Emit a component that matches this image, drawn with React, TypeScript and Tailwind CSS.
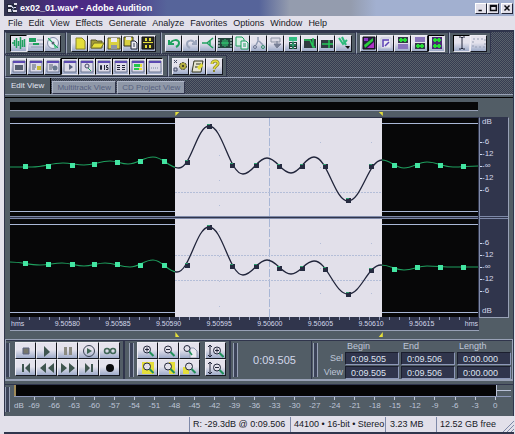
import React from 'react';

const GREEN = '#1fa05f';
const NAVY = '#33384f';
const YELLOW = '#e5df3a';

const windowFrame = (
  <>
    <path d="M2 2h12v11H2z" fill="#dddbe8" stroke="#6b7490" />
    <path d="M2 2h12v2H2z" fill="#5b48b0" />
  </>
);

const magnifier = (
  <>
    <circle cx="7" cy="5.5" r="3.5" fill="#e2e0ea" stroke="#22263a" />
    <path d="M9.5 8l4 4" stroke="#20905a" strokeWidth="2" />
  </>
);

const heightArrow = <path d="M2 1v12M0 3l2-2 2 2M0 11l2 2 2-2" fill="none" stroke="#22263a" />;

const icons: Record<string, React.ReactNode> = {
  wave: <path d="M1 7h2M3.5 4v6M5.5 2v10M7.5 5v5M9.5 1v12M11.5 4v7M13.5 3v8M15 7h1" stroke={GREEN} strokeWidth="1.5" />,
  multitrack: (
    <>
      <path d="M1 2h7v4H1z" fill={GREEN} />
      <path d="M9 4h6M1 8h5M7 8h8M3 11h12" stroke="#8f9ab2" />
      <path d="M5 7h6v2H5z" fill={GREEN} />
    </>
  ),
  cd: (
    <>
      <circle cx="8" cy="7" r="5.5" fill="#e9edf5" stroke="#7d88a6" />
      <path d="M8 7L3 4l2-2zM8 7l5 4-3 2z" fill="#58c990" />
      <path d="M3 2l10 10" stroke={GREEN} />
      <circle cx="8" cy="7" r="1.5" fill="#555e70" />
    </>
  ),
  newFile: <path d="M4 2h6l3 3v8H4z" fill={YELLOW} stroke="#8a852d" />,
  open: (
    <>
      <path d="M2 4h5l1 1h5v7H2z" fill="#a39c36" stroke="#55532a" />
      <path d="M2 12l3-5h10l-3 5z" fill={YELLOW} stroke="#77732d" />
    </>
  ),
  save: (
    <>
      <path d="M2 2h12v11H2z" fill="#d9d040" stroke="#55532a" />
      <path d="M5 2h6v4H5z" fill="#eceaf2" />
      <path d="M5 9h6v4H5z" fill="#8d93a4" />
    </>
  ),
  saveAs: (
    <>
      <path d="M1 1h9v9H1z" fill="#d9d040" stroke="#33351f" />
      <path d="M3 1h5v3H3z" fill="#eceaf2" />
      <path d="M8 5h4l2 2v6H8z" fill="#eceaf2" stroke="#22263a" />
      <path d="M10 8h2M10 10h2" stroke={NAVY} />
    </>
  ),
  saveAll: (
    <>
      <path d="M2 1h12v12H2z" fill="#2b2b20" stroke="#111" />
      <path d="M5 2h2v3H5zM9 2h2v3H9zM3 6h10v1H3zM5 9h6v3H5z" fill={YELLOW} />
      <path d="M7 9h2v3H7z" fill="#222" />
    </>
  ),
  undo: <path d="M3 4v4h5M4 8c2-5 9-5 9-1 0 2-1 3-3 4" fill="none" stroke={GREEN} strokeWidth="2" />,
  redo: <path d="M13 4v4H9M12 8C10 3 4 4 4 8c0 2 1 3 3 4" fill="none" stroke="#9ba5bb" strokeWidth="2" />,
  cut: <path d="M2 7h5l6-5M7 7l6 5M10 4v6" fill="none" stroke={GREEN} strokeWidth="1.5" />,
  trim: (
    <>
      <path d="M1 2h14v10H1z" fill="#24443c" />
      <path d="M4 7h8M6 4v6M8 3v8M10 4v6" stroke="#32d377" />
      <path d="M2 3v8M14 3v8" stroke="#d8e5e8" strokeDasharray="2 1" />
    </>
  ),
  copy: (
    <>
      <path d="M2 1h6l2 2v7H2z" fill="#d8f0e4" stroke={GREEN} />
      <path d="M7 5h5l2 2v6H7z" fill="#e9edf5" stroke={GREEN} />
      <path d="M9 8h3M9 10h3" stroke={GREEN} />
    </>
  ),
  scissors: (
    <>
      <path d="M7 1v4l-2 4M8 5l4 4" fill="none" stroke="#8f9ab2" strokeWidth="1.5" />
      <circle cx="4" cy="11" r="1.5" fill="none" stroke="#6b7490" />
      <circle cx="12" cy="11" r="1.5" fill="none" stroke="#35906a" />
    </>
  ),
  paste: (
    <>
      <path d="M3 2h9v4H3z" fill="#dad9e4" stroke="#8d93a4" />
      <path d="M9 5v6M6 8l3 4 4-4z" fill="#777f95" stroke="#777f95" />
    </>
  ),
  mix: (
    <>
      <path d="M4 1h8v4H4z" fill="#33bd82" />
      <path d="M4 6h8v7H4z" fill="#203a35" />
      <path d="M8 5v8M5 9h6" stroke="#33bd82" />
      <path d="M5 7h2v1H5zM9 7h2v1H9zM5 11h2v1H5zM9 11h2v1H9z" fill="#e2e0ea" />
    </>
  ),
  convert: (
    <>
      <path d="M2 3h12v9H2z" fill="#303b40" />
      <path d="M2 4h6l3 7h2M11 2v8" fill="none" stroke="#26c95a" strokeWidth="1.5" />
    </>
  ),
  insert: (
    <>
      <path d="M2 4h12v8H2z" fill="#303b40" />
      <path d="M3 8h11M10 4v8" stroke="#26c95a" strokeWidth="1.5" />
    </>
  ),
  brush: (
    <>
      <path d="M3 2l4 6 4-4M6 1l4 8" fill="none" stroke="#2dbb7b" strokeWidth="2" />
      <path d="M9 10h5l-2 3z" fill="#111" />
    </>
  ),
  spectral: (
    <>
      <path d="M2 1h12v12H2z" fill="#2a1f48" stroke="#111" />
      <path d="M3 9l9-7v3l-8 7z" fill="#2bd03a" />
      <path d="M6 12l7-6v6z" fill="#b132c8" />
      <path d="M3 2h4v3H3z" fill="#8c35c4" />
    </>
  ),
  corner: (
    <>
      <path d="M3 2h10v10H3z" fill="#e9e7f0" stroke="#c3c8d8" />
      <path d="M5 11V4h6M7 10l4-4" fill="none" stroke="#5a3fb4" strokeWidth="1.5" />
    </>
  ),
  trackTop: (
    <>
      <path d="M3 1h10v6H3z" fill="#333a48" />
      <path d="M4 4h8M6 2v4M10 2v4" stroke="#25dd35" strokeWidth="2" />
      <path d="M3 8h10v5H3z" fill="#8a76bc" />
    </>
  ),
  trackBottom: (
    <>
      <path d="M3 1h10v5H3z" fill="#8a76bc" />
      <path d="M3 7h10v6H3z" fill="#333a48" />
      <path d="M4 10h8M6 8v4M10 8v4" stroke="#25dd35" strokeWidth="2" />
    </>
  ),
  trackBoth: (
    <>
      <path d="M3 1h10v12H3z" fill="#4a2a74" />
      <path d="M4 4h8M6 2v4M10 2v4M4 10h8M6 8v4M10 8v4" stroke="#25dd35" strokeWidth="2" />
    </>
  ),
  beam: <path d="M5 1h2l1 1 1-1h2M8 2v10M5 13h2l1-1 1 1h2" fill="none" stroke="#22263a" />,
  marquee: <path d="M2 3h12v8H2z" fill="none" stroke="#979fb4" strokeDasharray="2 2" />,
  winList: <>{windowFrame}<path d="M4 6h8v5H4z" fill="#555e70" /></>,
  winFx: <>{windowFrame}<path d="M4 6h4M4 8h4M4 10h3" stroke="#555e70" /><path d="M9 7h4v4H9z" fill="#c8bd34" /></>,
  winCue: <>{windowFrame}<path d="M4 6h4M4 8h4M4 10h3" stroke="#555e70" /><circle cx="10" cy="9" r="2.5" fill="#68788e" /></>,
  winPlay: <>{windowFrame}<path d="M7 5v6l4-3z" fill="#5a6380" /></>,
  winZoom: <>{windowFrame}<circle cx="8" cy="7" r="2" fill="none" stroke="#444b66" /><path d="M9 9l3 3" stroke={GREEN} /></>,
  winTime: <>{windowFrame}<path d="M4.5 6.5h1v4h-1zM8.5 6v5M12 6.5h-1.500v2H12v2h-2" fill="none" stroke="#22263a" /></>,
  winSel: <>{windowFrame}<path d="M4 6.5h3M4 8.5h3M4 10.5h3M9 6.5h3M9 8.5h3M9 10.5h3" stroke="#22263a" /></>,
  winLevel: (
    <>
      {windowFrame}
      <path d="M4 5h6v3H4zM4 9h5v2H4z" fill="#25c84a" />
      <path d="M10 5h2v3h-2zM9 9h3v2H9z" fill={YELLOW} />
    </>
  ),
  winStatus: <>{windowFrame}<path d="M4 9h8" stroke="#7d88a6" strokeDasharray="1 1" /></>,
  options: (
    <>
      <path d="M1 1l3 3M4 1L1 4M1 9h3v3H1z" fill="none" stroke="#444b66" />
      <circle cx="10" cy="7" r="3.5" fill="#b4ad42" stroke="#3b3d30" strokeDasharray="2 1" />
      <circle cx="10" cy="7" r="1" fill="#222" />
    </>
  ),
  script: (
    <>
      <path d="M4 2h9l-2 11H2z" fill="#e5e3d0" stroke="#33351f" />
      <path d="M6 5h5M5 8h4" stroke="#33351f" />
      <path d="M7 8l5-4 1 3-4 4z" fill={YELLOW} />
    </>
  ),
  help: (
    <>
      <path d="M5 5c0-4 7-4 6 0-1 2-3 2-4 5" fill="none" stroke="#8a852d" strokeWidth="3" />
      <path d="M5 5c0-4 7-4 6 0-1 2-3 2-4 5" fill="none" stroke={YELLOW} strokeWidth="1.5" />
      <path d="M6 11h2v2H6z" fill="#8a852d" />
    </>
  ),
  stop: <path d="M5 4h6v6H5z" fill="#77776c" stroke="#5a6380" />,
  play: <path d="M5 2v11l6-5z" fill="#3f554f" />,
  pause: <path d="M4 3h3v8H4zM9 3h3v8H9z" fill="#8c8b82" />,
  playLoop: (
    <>
      <circle cx="8" cy="7" r="5.5" fill="none" stroke="#3a4256" />
      <path d="M6 4v6l5-3z" fill="#3f6656" />
    </>
  ),
  infinity: (
    <>
      <circle cx="5" cy="7" r="2.5" fill="none" stroke="#3f6656" strokeWidth="1.5" />
      <circle cx="11" cy="7" r="2.5" fill="none" stroke="#3f6656" strokeWidth="1.5" />
    </>
  ),
  toStart: <path d="M4 3h2v8H4zM12 2v10L7 7z" fill="#3f554f" />,
  rewind: <path d="M7 2v10L1 7zM15 2v10L9 7z" fill="#3f554f" />,
  forward: <path d="M1 2v10l6-5zM9 2v10l6-5z" fill="#3f554f" />,
  toEnd: <path d="M4 2v10l5-5zM10 3h2v8h-2z" fill="#3f554f" />,
  record: <circle cx="8" cy="7" r="4" fill="#0a0a0c" />,
  zoomIn: <>{magnifier}<path d="M5 5.5h4M7 3.5v4" stroke="#22263a" /></>,
  zoomOut: <>{magnifier}<path d="M5 5.5h4" stroke="#22263a" /></>,
  zoomFull: (
    <>
      <path d="M8 4h4l3 3v7H8z" fill="#eceaf2" stroke="#9098b0" />
      <circle cx="5" cy="4.5" r="3" fill="#e2e0ea" stroke="#22263a" />
      <path d="M7 7l3 4" stroke="#20905a" strokeWidth="1.5" />
    </>
  ),
  zoomSel: <><path d="M2 1h12v12H2z" fill={YELLOW} />{magnifier}</>,
  zoomLeft: <><path d="M8 1h6v12H8z" fill={YELLOW} />{magnifier}</>,
  zoomRight: <><path d="M1 6h6v7H1z" fill={YELLOW} />{magnifier}</>,
  vZoomIn: <>{heightArrow}<g transform="translate(2 1)">{magnifier}<path d="M5 5.5h4M7 3.5v4" stroke="#22263a" /></g></>,
  vZoomOut: <>{heightArrow}<g transform="translate(2 1)">{magnifier}<path d="M5 5.5h4" stroke="#22263a" /></g></>,
};

const Icon: React.FC<{ name: string }> = ({ name }) => (
  <svg viewBox="0 0 16 14" className="w-4 h-[14px] shrink-0" aria-hidden="true">
    {icons[name]}
  </svg>
);

interface ToolButtonProps {
  name: string;
  wide?: boolean;
  pressed?: boolean;
}

const ToolButton: React.FC<ToolButtonProps> = ({ name, wide, pressed }) => (
  <button
    type="button"
    aria-label={name}
    className={`flex items-center justify-center overflow-hidden h-[17px] border bg-linear-to-b from-[#e4e2ec] from-45% to-[#9eabc9] ${
      wide ? 'w-[21px]' : 'w-[17px]'
    } ${pressed ? 'border-t-black border-l-black border-r-[#e4e2ec] border-b-[#e4e2ec]' : 'border-t-[#eeedf4] border-l-[#eeedf4] border-r-[#15171f] border-b-[#15171f]'}`}
  >
    <Icon name={name} />
  </button>
);

interface ToolGroupProps {
  names: string[];
  pressed?: string[];
  roomy?: boolean;
}

const ToolGroup: React.FC<ToolGroupProps> = ({ names, pressed = [], roomy }) => (
  <div className={`flex items-center h-[22px] bg-[#525d66] border border-l-[#9aa3b8] border-t-[#30354c] border-r-[#30354c] border-b-[#30354c] ${roomy ? 'px-1' : 'px-[3px]'}`}>
    {names.map((n) => (
      <ToolButton key={n} name={n} pressed={pressed.includes(n)} />
    ))}
  </div>
);

const Grip = () => (
  <div className="w-[5px] shrink-0 self-stretch my-[2px] border-x border-[#98a1b6] bg-[#3c4359]" />
);

const DITHER = 'bg-[repeating-conic-gradient(#59616a_0_25%,#363c52_0_50%)] bg-[length:2px_2px]';

const TAB_IDLE = 'h-[13px] bg-[#8f98a8] border border-t-[#b0b8ca] border-l-[#b0b8ca] border-r-[#30354c] border-b-[#30354c] text-[#56617f] leading-[11px]';

const menus = ['File', 'Edit', 'View', 'Effects', 'Generate', 'Analyze', 'Favorites', 'Options', 'Window', 'Help'];

type Point = [number, number];

const SAMPLE_X = [15, 38, 62, 84, 107, 130, 154, 177, 199, 222, 246, 269, 292, 315, 338, 361, 384, 407, 430, 453];
const SEL_START = 165;
const SEL_END = 372;

const leftChannel = {
  turns: [
    [0, 49], [22, 49], [53, 45], [74, 47], [100, 43], [118, 46], [143, 39], [169, 50], [199, 8], [233, 56],
    [257, 40], [281, 55], [304, 39], [338, 83], [372, 42], [394, 50], [417, 44], [443, 49], [468, 48],
  ] as Point[],
  samples: [48, 48, 47, 46, 44, 43, 43, 44, 8, 47, 47, 48, 48, 48, 82, 48, 47, 47, 47, 48],
  rows: [74],
};

const rightChannel = {
  turns: [
    [0, 43], [30, 46], [52, 44], [74, 47], [95, 44], [120, 48], [143, 41], [167, 53], [199, 8], [233, 56],
    [257, 41], [281, 55], [304, 42], [338, 75], [371, 46], [394, 51], [417, 47], [443, 48], [468, 48],
  ] as Point[],
  samples: [44, 45, 45, 45, 45, 46, 46, 46, 8, 47, 47, 49, 49, 50, 75, 51, 50, 48, 48, 48],
  rows: [36, 61],
};

// joins the turning points with flat tangents
const curve = (pts: Point[]) =>
  pts.reduce((d, [x, y], i) => {
    if (i === 0) return `M${x} ${y}`;
    const [px, py] = pts[i - 1];
    const h = (x - px) * 0.4;
    return `${d}C${px + h} ${py} ${x - h} ${y} ${x} ${y}`;
  }, '');

const Track: React.FC<{ id: string; channel: typeof leftChannel }> = ({ id, channel }) => {
  const d = curve(channel.turns);
  return (
    <svg viewBox="0 0 468 98" preserveAspectRatio="none" className="block w-full h-[98px] bg-[#070708]">
      <clipPath id={id}>
        <rect x={SEL_START} y="0" width={SEL_END - SEL_START} height="98" />
      </clipPath>
      <path d="M0 5.5H468M0 93.5H468" stroke="#a9b7d6" />
      <path d={d} fill="none" stroke={GREEN} strokeWidth="1.2" />
      <g clipPath={`url(#${id})`}>
        <rect x={SEL_START} y="0" width={SEL_END - SEL_START} height="98" fill="#e2e0ea" />
        <path d="M259.5 0V98" stroke="#a9b7d6" strokeDasharray="8 2" />
        <path d="M209.5 12V98M310.5 24V98M361.5 24V98" stroke="#b4bed8" strokeDasharray="1 24" />
        {channel.rows.map((y) => (
          <path key={y} d={`M${SEL_START} ${y + 0.5}H${SEL_END}`} stroke="#b4bed8" strokeDasharray="2 1" />
        ))}
        <path d={d} fill="none" stroke="#20243a" strokeWidth="1.3" />
      </g>
      {SAMPLE_X.map((x, i) => {
        const selected = x > SEL_START && x < SEL_END;
        const y = channel.samples[i];
        return (
          <g key={x}>
            <rect x={x - 2} y={y - 2} width="5" height="5" fill={selected ? '#262b40' : '#43e5a2'} />
            {selected && <rect x={x - 2} y={y - 2} width="3" height="1" fill="#2b9c6c" />}
          </g>
        );
      })}
    </svg>
  );
};

const scale = ['-6', '-12', '-∞', '-12', '-6'];

const DbScale: React.FC<{ flipped?: boolean }> = ({ flipped }) => (
  <div className={`flex flex-col h-[98px] text-[8px] text-[#d3d8ea] ${flipped ? 'pt-[18px]' : ''}`}>
    {!flipped && <span className="h-2 leading-2 mb-[10px] pl-[2px]">dB</span>}
    {scale.map((v, i) => (
      <span key={i} className="flex items-center h-3 leading-3">
        <i className="w-[2px] h-px bg-[#d3d8ea]" />
        {v}
      </span>
    ))}
    {flipped && <span className="h-2 leading-2 mt-[10px] pl-[2px]">dB</span>}
  </div>
);

const Markers: React.FC<{ below?: boolean }> = ({ below }) => (
  <svg viewBox="0 0 468 6" preserveAspectRatio="none" className="block w-full h-[6px]">
    <path d={below ? 'M165 1v5h4zM372 1v5h-4z' : 'M165 1v4l4-4zM372 1v4l-4-4z'} fill={YELLOW} />
  </svg>
);

const times = ['9.50580', '9.50585', '9.50590', '9.50595', '9.50600', '9.50605', '9.50610', '9.50615'];

const TimeRuler = () => (
  <div className="h-[13px] bg-[#30354c] text-[7px] text-[#d3d8ea]">
    <div className="h-[3px] bg-[repeating-linear-gradient(90deg,transparent_0_9px,#8d98b8_9px_10px)]" />
    <div className="flex leading-[8px]">
      <span className="w-8 pl-px">hms</span>
      {times.map((t) => (
        <span key={t} className="flex-1 text-center">{t}</span>
      ))}
      <span className="w-8 pr-px text-right">hms</span>
    </div>
  </div>
);

const levels = ['-69', '-66', '-63', '-60', '-57', '-54', '-51', '-48', '-45', '-42', '-39', '-36', '-33', '-30', '-27', '-24', '-21', '-18', '-15', '-12', '-9', '-6', '-3', '0'];

const LevelMeter = () => (
  <div className="flex h-[30px] border-t border-[#30354c]">
    <Grip />
    <div className="flex-1 ml-1 mr-[2px]">
      <div className="flex h-3 bg-[#050506] border-b border-[#8d98b8]">
        <i className="w-[2px] bg-[#a08a58]" />
        <div className="ml-auto w-[15px] border-l border-[#b9c1d6] flex flex-col">
          <div className="h-[6px] border-b border-[#b9c1d6] bg-[#525d66]" />
          <div className="flex-1 bg-[#525d66]" />
        </div>
      </div>
      <div className="flex text-[8px] leading-[10px] text-[#bfc6d8]">
        <span className="w-[10px] pt-1">dB</span>
        {levels.map((l) => (
          <span key={l} className="flex flex-col items-center flex-1">
            <i className="w-px h-[3px] mb-px bg-[#bfc6d8]" />
            {l}
          </span>
        ))}
        <span className="w-[6px]" />
      </div>
    </div>
  </div>
);

const fields = [
  { row: 'Sel', values: ['0:09.505', '0:09.506', '0:00.000'] },
  { row: 'View', values: ['0:09.505', '0:09.506', '0:00.000'] },
];
const columns = ['Begin', 'End', 'Length'];

const SelectionPanel = () => (
  <div className="flex flex-1 min-w-0 border-l border-[#30354c] pl-px">
    <Grip />
    <div className="flex-1 min-w-0 grid grid-cols-[25px_1fr_1fr_1fr] gap-x-[2px] gap-y-px content-start pr-[2px] text-[9px] leading-[10px] text-[#bfc6d8]">
      <span />
      {columns.map((c) => (
        <span key={c} className="pl-[2px]">{c}</span>
      ))}
      {fields.map(({ row, values }) => (
        <React.Fragment key={row}>
          <span className="text-right leading-3">{row}</span>
          {values.map((v, i) => (
            <input
              key={columns[i]}
              aria-label={`${row} ${columns[i]}`}
              defaultValue={v}
              className="min-w-0 w-full h-[13px] pl-[5px] bg-[#30354c] border border-t-[#1b1e2e] border-l-[#1b1e2e] border-r-[#8d98b8] border-b-[#8d98b8] text-[#dfe3f0] leading-[11px]"
            />
          ))}
        </React.Fragment>
      ))}
    </div>
  </div>
);

const transport = ['stop', 'play', 'pause', 'playLoop', 'infinity', 'toStart', 'rewind', 'forward', 'toEnd', 'record'];
const zooms = ['zoomIn', 'zoomOut', 'zoomFull', 'zoomSel', 'zoomLeft', 'zoomRight'];

const App: React.FC = () => {
  return (
    <div className="min-h-screen bg-[#e2e0ea] pl-1 pr-px font-['Liberation_Sans',Arial,sans-serif] text-[9px] text-[#16181f] flex flex-col">
      <header className="flex items-center h-4 pl-[2px] pr-px bg-[linear-gradient(90deg,#33354f_0%,#4b2a85_11%,#4b2a85_20%,#56649a_32%,#56649a_50%,#949cae_56%,#949cae_68%,#a2b0d0_73%)]">
        <svg viewBox="0 0 12 12" className="w-3 h-3 mr-[2px]" aria-hidden="true">
          <path d="M1 2h9v9H1z" fill="#22263a" />
          <path d="M2 3h4v2H2zM8 1h3v2H8zM6 5h4v1H6zM2 7h3v3H2zM7 8h4v2H7z" fill="#e2e0ea" />
          <path d="M5 3l3 3-3 4" fill="none" stroke="#8d98b8" />
        </svg>
        <h1 className="font-bold text-white leading-3">ex02_01.wav* - Adobe Audition</h1>
        <div className="ml-auto flex items-center">
          {['M3 9h4', 'M3 3h7v6H3zM3 4h7', 'M3 3l6 6M9 3L3 9'].map((d, i) => (
            <button
              key={d}
              type="button"
              aria-label={['Minimize', 'Maximize', 'Close'][i]}
              className="w-3 h-[11px] last:ml-[2px] flex items-center justify-center bg-[#e2e0ea] border border-t-white border-l-white border-r-[#22263a] border-b-[#22263a]"
            >
              <svg viewBox="0 0 12 12" className="w-[10px] h-[10px]">
                <path d={d} fill="none" stroke="#0c0d12" strokeWidth="1.8" />
              </svg>
            </button>
          ))}
        </div>
      </header>

      <nav className="flex items-center gap-[6px] h-[14px] pl-1 pb-px leading-3">
        {menus.map((m) => (
          <button key={m} type="button">{m}</button>
        ))}
      </nav>

      <div className="flex-1 flex flex-col bg-[#525d66] border-l border-r border-[#30354c]">
        <div className={`border-t-2 border-[#30354c] ${DITHER}`}>
          <div className="flex mb-px">
            <ToolGroup roomy names={['wave', 'multitrack', 'cd']} pressed={['wave']} />
            <ToolGroup roomy names={['newFile', 'open', 'save', 'saveAs', 'saveAll']} />
            <ToolGroup names={['undo', 'redo', 'cut', 'trim', 'copy', 'scissors', 'paste', 'mix', 'convert', 'insert', 'brush']} />
            <ToolGroup names={['spectral', 'corner', 'trackTop', 'trackBottom', 'trackBoth']} pressed={['trackBoth']} />
            <ToolGroup names={['beam', 'marquee']} pressed={['beam']} />
          </div>
          <div className="flex">
            <ToolGroup roomy names={['winList', 'winFx', 'winCue', 'winPlay', 'winZoom', 'winTime', 'winSel', 'winLevel', 'winStatus']} pressed={['winPlay', 'winZoom', 'winTime', 'winSel', 'winLevel', 'winStatus']} />
            <ToolGroup names={['options', 'script', 'help']} />
          </div>
        </div>

        <div className={`flex items-end gap-px h-[17px] border-t border-t-[#98a1b6] text-[8px] ${DITHER}`} role="tablist">
          <button type="button" role="tab" aria-selected="true" className="self-stretch px-[6px] bg-[#525d66] border-r border-black text-[#e2e6f2]">Edit View</button>
          <button type="button" role="tab" aria-selected="false" className={`w-[64px] ${TAB_IDLE}`}>Multitrack View</button>
          <button type="button" role="tab" aria-selected="false" className={`w-[68px] ${TAB_IDLE}`}>CD Project View</button>
        </div>

        <main className="border-t border-[#98a1b6]">
          <div className="mt-[2px] border-t border-black pl-[5px] pr-1 pt-1 pb-[2px]">
            <div className="mr-[31px] h-[9px] bg-[#070708] border-b border-[#98a1b6]" />
            <div className="flex">
              <div className="flex-1 min-w-0">
                <Markers />
                <div className="border-t border-r border-[#30354c]">
                  <Track id="selection-left" channel={leftChannel} />
                  <div className="h-[3px] bg-[#30354c] border-y border-[#7e89a8]" />
                  <Track id="selection-right" channel={rightChannel} />
                </div>
                <div className="border-b border-[#98a1b6]">
                  <TimeRuler />
                </div>
                <Markers below />
              </div>
              <div className="w-[30px] mt-[6px] self-start bg-[#30354c] border border-t-[#30354c] border-l-[#7e89a8] border-r-[#98a1b6] border-b-[#98a1b6]">
                <DbScale />
                <div className="h-[3px] border-y border-[#7e89a8]" />
                <DbScale flipped />
              </div>
            </div>
          </div>
        </main>

        <section className="flex h-[42px] border-y-2 border-t-[#30354c] border-b-[#98a1b6] outline outline-[#98a1b6] -outline-offset-1">
          <div className="flex pr-[3px]">
            <Grip />
            <div className="grid grid-cols-5 content-start pt-px ml-[5px]">
              {transport.map((n) => <ToolButton key={n} name={n} wide />)}
            </div>
          </div>
          <div className="flex pr-[3px] border-l-2 border-[#30354c] pl-1">
            <Grip />
            <div className="grid grid-cols-3 content-start pt-px ml-[3px] mr-[5px]">
              {zooms.map((n) => <ToolButton key={n} name={n} wide />)}
            </div>
            <div className="pt-px">
              <ToolButton name="vZoomIn" wide />
              <ToolButton name="vZoomOut" wide />
            </div>
          </div>
          <div className="flex w-[82px] border-l-2 border-[#30354c] pl-[2px]">
            <Grip />
            <output className="flex-1 flex items-center justify-center text-[11px] text-[#d3d8ea]">0:09.505</output>
          </div>
          <SelectionPanel />
        </section>

        <div className="pt-[3px]">
          <LevelMeter />
        </div>
      </div>

      <footer className="flex items-stretch h-[18px] leading-[14px] border-b-2 border-[#30354c] pt-px">
        <span className="w-[185px]" />
        <span className="w-[101px] pl-[3px] border-l border-[#7e89a8] whitespace-nowrap">R: -29.3dB @ 0:09.506</span>
        <span className="w-[95px] pl-[3px] border-l border-[#7e89a8] whitespace-nowrap">44100 • 16-bit • Stereo</span>
        <span className="w-[51px] pl-1 border-l border-[#7e89a8] whitespace-nowrap">3.23 MB</span>
        <span className="flex-1 pl-[3px] border-l border-[#7e89a8] whitespace-nowrap">12.52 GB free</span>
        <svg viewBox="0 0 12 12" className="w-3 h-3 self-end" aria-hidden="true">
          <path d="M1 12L12 1M5 12l7-7M9 12l3-3" stroke="#7e89a8" />
        </svg>
      </footer>
    </div>
  );
};

export default App;
